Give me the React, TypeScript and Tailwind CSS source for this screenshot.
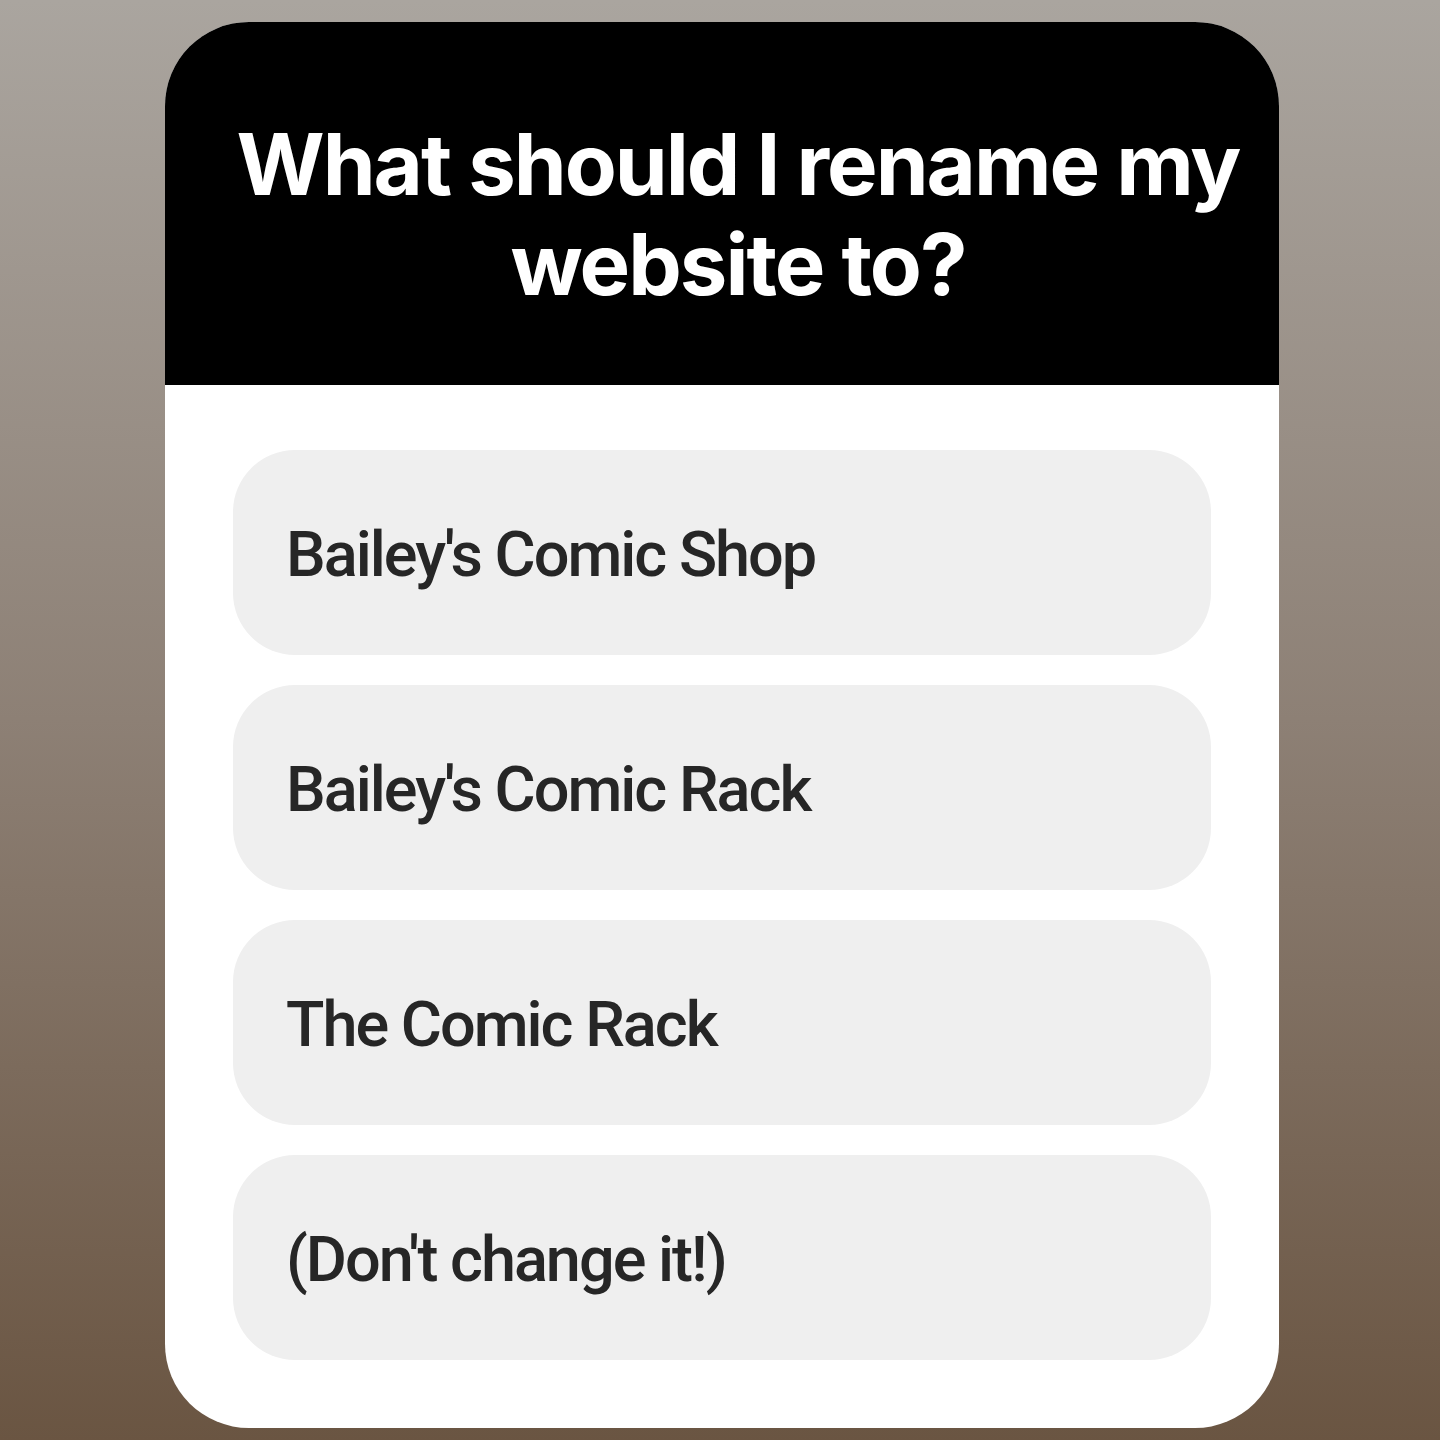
const options = ["Bailey's Comic Shop", "Bailey's Comic Rack", 'The Comic Rack', "(Don't change it!)"];

export default function App() {
  return (
    <div className="h-[1440px] w-[1440px] overflow-hidden bg-gradient-to-b from-[#aaa59f] via-[#8d8075] to-[#6a5542] pt-[22px] pl-[165px]">
      <div className="flex h-[1406px] w-[1114px] flex-col overflow-hidden rounded-[84px] bg-white">
        <div className="flex h-[363px] flex-col items-center justify-center bg-black pl-[32px] pt-[22px]">
          <h1
            className="text-center text-[85px] font-bold leading-[100px] tracking-[-2px] text-white"
            style={{ fontFamily: 'Inter, "Noto Sans", sans-serif' }}
          >
            What should I rename my
            <br />
            website to?
          </h1>
        </div>
        <div className="flex flex-col gap-[30px] px-[68px] pt-[65px]">
          {options.map((o) => (
            <div key={o} className="flex h-[205px] items-center rounded-[62px] bg-[#efefef] pl-[53px] pt-[6px]">
              <span
                className="text-[63px] font-medium tracking-[-2px] text-[#262626]"
                style={{ fontFamily: 'Roboto, "Liberation Sans", sans-serif' }}
              >
                {o}
              </span>
            </div>
          ))}
        </div>
      </div>
    </div>
  );
}
